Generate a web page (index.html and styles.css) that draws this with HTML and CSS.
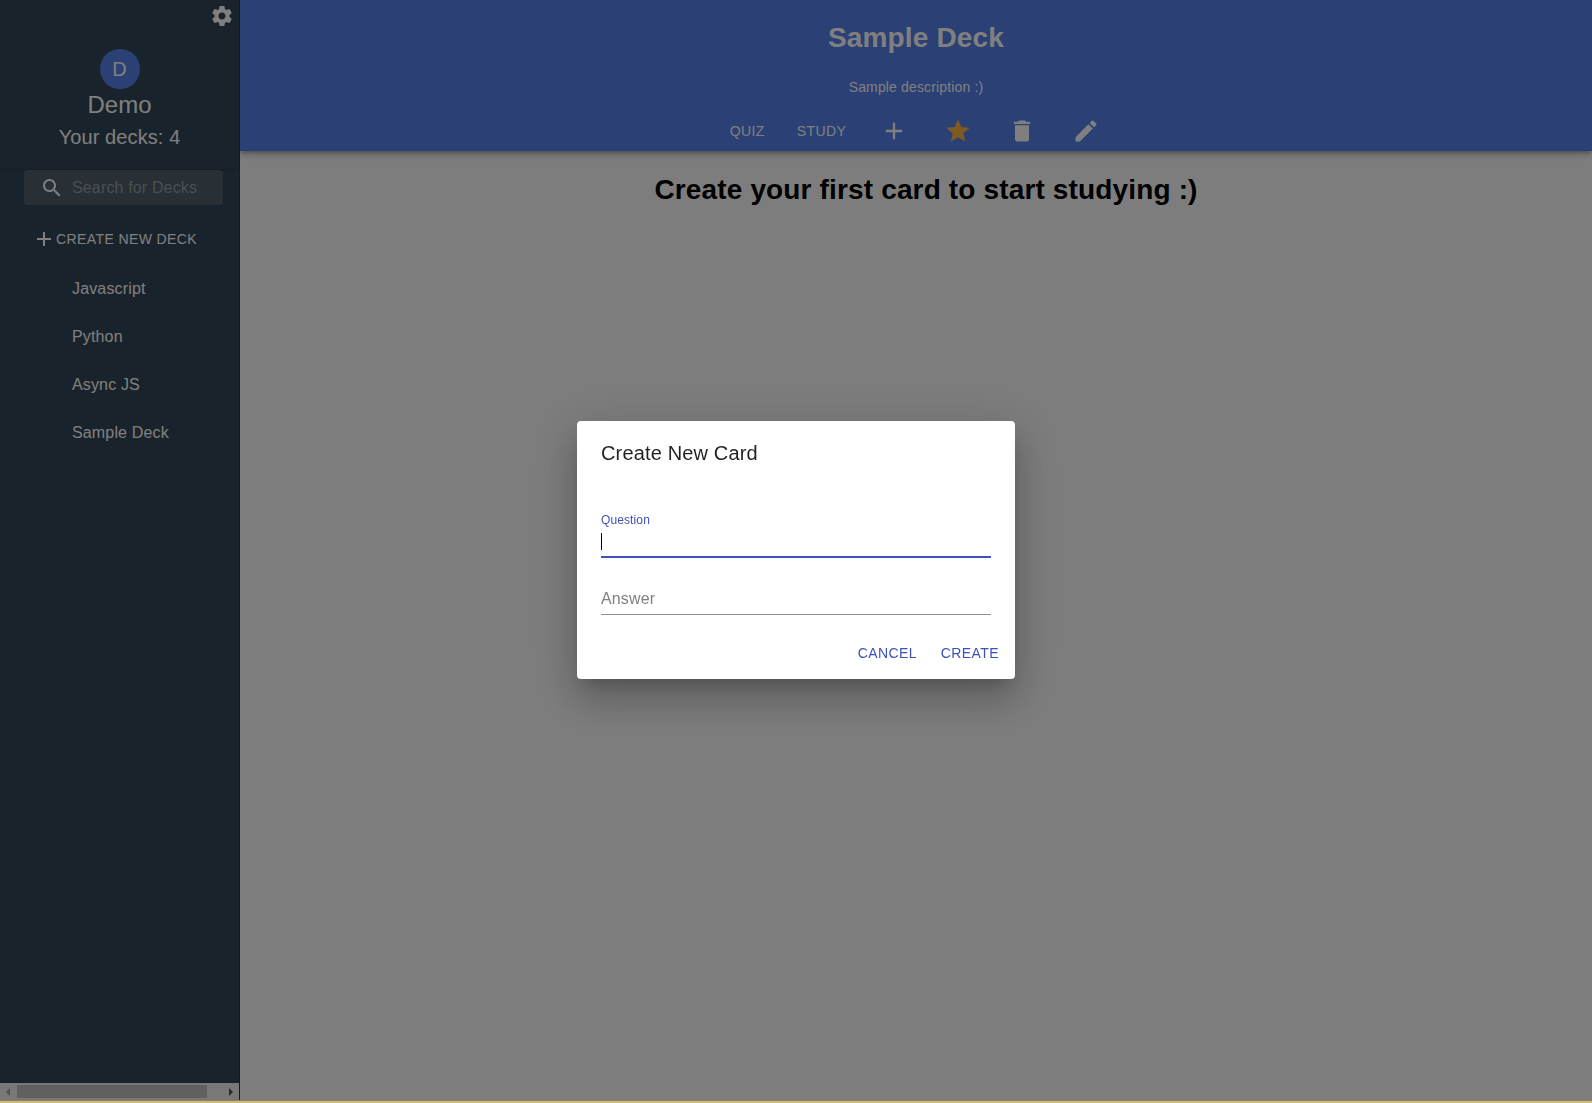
FILE: index.html
```html
<!DOCTYPE html>
<html lang="en">
<head>
<meta charset="utf-8">
<title>Flash Cards</title>
<link rel="stylesheet" href="styles.css">
</head>
<body>
<div class="app">
  <aside class="sidebar">
    <section class="profile">
      <svg class="icon gear" viewBox="0 0 24 24"><path d="M19.43 12.98c.04-.32.07-.64.07-.98s-.03-.66-.07-.98l2.11-1.65c.19-.15.24-.42.12-.64l-2-3.46c-.12-.22-.39-.3-.61-.22l-2.49 1c-.52-.4-1.08-.73-1.69-.98l-.38-2.65C14.46 2.18 14.25 2 14 2h-4c-.25 0-.46.18-.49.42l-.38 2.65c-.61.25-1.17.59-1.69.98l-2.49-1c-.23-.09-.49 0-.61.22l-2 3.46c-.13.22-.07.49.12.64l2.11 1.65c-.04.32-.07.65-.07.98s.03.66.07.98l-2.11 1.65c-.19.15-.24.42-.12.64l2 3.46c.12.22.39.3.61.22l2.49-1c.52.4 1.08.73 1.69.98l.38 2.65c.03.24.24.42.49.42h4c.25 0 .46-.18.49-.42l.38-2.65c.61-.25 1.17-.59 1.69-.98l2.49 1c.23.09.49 0 .61-.22l2-3.46c.12-.22.07-.49-.12-.64l-2.11-1.65zM12 15.5c-1.93 0-3.5-1.57-3.5-3.5s1.57-3.5 3.5-3.5 3.5 1.57 3.5 3.5-1.57 3.5-3.5 3.5z"/></svg>
      <div class="avatar">D</div>
      <div class="user-name">Demo</div>
      <div class="deck-count">Your decks: 4</div>
    </section>
    <div class="search">
      <svg class="icon search-icon" viewBox="0 0 24 24"><path d="M15.5 14h-.79l-.28-.27C15.41 12.59 16 11.11 16 9.5 16 5.91 13.09 3 9.5 3S3 5.91 3 9.5 5.91 16 9.5 16c1.61 0 3.09-.59 4.23-1.57l.27.28v.79l5 4.99L20.49 19l-4.99-5zm-6 0C7.01 14 5 11.99 5 9.5S7.01 5 9.5 5 14 7.01 14 9.5 11.99 14 9.5 14z"/></svg>
      <span class="search-text">Search for Decks</span>
    </div>
    <div class="new-deck">
      <svg class="icon plus-small" viewBox="0 0 14 14"><path d="M6 0h2v6h6v2H8v6H6V8H0V6h6z"/></svg>
      <span>CREATE NEW DECK</span>
    </div>
    <nav class="decks">
      <div class="deck">Javascript</div>
      <div class="deck">Python</div>
      <div class="deck">Async JS</div>
      <div class="deck">Sample Deck</div>
    </nav>
    <div class="scrollbar">
      <svg class="arrow arrow-off" viewBox="0 0 4 8"><path d="M4 0v8L0 4z"/></svg>
      <div class="track"><div class="thumb"></div></div>
      <svg class="arrow" viewBox="0 0 4 8"><path d="M0 0v8l4-4z"/></svg>
    </div>
  </aside>
  <main class="content">
    <header class="header">
      <h1 class="title">Sample Deck</h1>
      <p class="description">Sample description :)</p>
      <div class="actions">
        <span class="text-btn">QUIZ</span>
        <span class="text-btn">STUDY</span>
        <span class="icon-btn"><svg class="icon" viewBox="0 0 24 24"><path d="M19 13h-6v6h-2v-6H5v-2h6V5h2v6h6v2z"/></svg></span>
        <span class="icon-btn"><svg class="icon star" viewBox="0 0 24 24"><path d="M12 17.27L18.18 21l-1.64-7.03L22 9.24l-7.19-.61L12 2 9.19 8.63 2 9.24l5.46 4.73L5.82 21z"/></svg></span>
        <span class="icon-btn"><svg class="icon" viewBox="0 0 24 24"><path d="M6 19c0 1.1.9 2 2 2h8c1.1 0 2-.9 2-2V7H6v12zM19 4h-3.500l-1-1h-5l-1 1H5v2h14V4z"/></svg></span>
        <span class="icon-btn"><svg class="icon" viewBox="0 0 24 24"><path d="M3 17.250V21h3.750L17.810 9.940l-3.750-3.750L3 17.250zM20.710 7.040c.39-.39.39-1.020 0-1.410l-2.340-2.340c-.39-.39-1.020-.39-1.410 0l-1.830 1.830 3.750 3.750 1.830-1.830z"/></svg></span>
      </div>
    </header>
    <h2 class="empty">Create your first card to start studying :)</h2>
  </main>
</div>
<div class="backdrop">
  <div class="dialog">
    <h3 class="dialog-title">Create New Card</h3>
    <div class="field focused">
      <div class="label">Question</div>
      <div class="input"><span class="caret"></span></div>
    </div>
    <div class="field">
      <div class="input placeholder">Answer</div>
    </div>
    <div class="dialog-actions"><span>CANCEL</span><span>CREATE</span></div>
  </div>
</div>
<div class="bottom-edge"></div>
</body>
</html>
```
FILE: styles.css
```css
* { box-sizing: border-box; }
body {
  margin: 0;
  height: 1103px;
  overflow: hidden;
  background: #fafafa;
  font-family: "Liberation Sans", Arial, sans-serif;
  font-size: 16px;
  letter-spacing: .15px;
}
h1, h2, h3, p { margin: 0; }
.icon { display: block; width: 24px; height: 24px; fill: currentColor; }
.app { display: flex; height: 1100px; }

.sidebar {
  display: flex;
  flex-direction: column;
  width: 240px;
  flex: none;
  background: #324656;
  border-right: 1px solid #263642;
  color: #fff;
}
.profile {
  height: 170px;
  display: flex;
  flex-direction: column;
  align-items: center;
  border-bottom: 1px solid #2b3c49;
}
.gear { flex: none; align-self: flex-end; margin: 4px 5px 21px 0; }
.avatar {
  width: 40px;
  height: 40px;
  border-radius: 50%;
  background: #5680e9;
  font-size: 20px;
  line-height: 40px;
  text-align: center;
}
.user-name { font-size: 24px; line-height: 32px; letter-spacing: 0; }
.deck-count { font-size: 20px; line-height: 32px; letter-spacing: .1px; }
.search {
  display: flex;
  align-items: center;
  height: 35px;
  margin: 0 16px 0 24px;
  border-radius: 4px;
  background: #515e6a;
}
.search-icon { margin: 0 8px 0 16px; width: 24px; }
.search-text { color: #969ea5; }
.new-deck {
  display: flex;
  align-items: center;
  gap: 5px;
  height: 36px;
  margin: 16px 0 0 37px;
  font-size: 14px;
  letter-spacing: .4px;
}
.plus-small { width: 14px; height: 14px; }
.decks { margin-top: 8px; flex: 1; }
.deck { height: 48px; line-height: 48px; padding-left: 72px; }
.scrollbar {
  display: flex;
  align-items: center;
  height: 17px;
  padding: 0 6px;
  background: #f1f1f1;
}
.arrow { width: 4px; height: 8px; fill: #505050; }
.arrow-off { fill: #a3a3a3; }
.track { flex: 1; padding: 0 7px; }
.thumb { width: 190px; height: 13px; background: #c1c1c1; }

.content { flex: 1; text-align: center; }
.header {
  height: 151px;
  background: #5680e9;
  color: #fff;
  box-shadow: 0 2px 4px -1px rgba(0,0,0,.2), 0 4px 5px rgba(0,0,0,.14), 0 1px 10px rgba(0,0,0,.12);
  clip-path: inset(0 0 -20px 0);
}
.title { padding-top: 21px; font-size: 28px; line-height: 33px; }
.description { padding-top: 25px; font-size: 14px; line-height: 16px; }
.actions {
  display: flex;
  justify-content: center;
  align-items: center;
  height: 48px;
  margin-top: 12px;
}
.text-btn { padding: 0 16px; font-size: 14px; letter-spacing: .4px; }
.icon-btn { padding: 0 18px; }
.icon-btn .icon { width: 28px; height: 28px; }
.star { color: #ffb547; }
.empty { padding: 22px 0 0 20px; font-size: 28px; line-height: 33px; }

.backdrop {
  position: fixed;
  inset: 0 0 3px;
  display: flex;
  align-items: center;
  justify-content: center;
  background: rgba(0,0,0,.5);
}
.dialog {
  width: 438px;
  height: 258px;
  padding: 16px 24px 8px;
  border-radius: 4px;
  background: #fff;
  color: rgba(0,0,0,.87);
  box-shadow: 0 11px 15px -7px rgba(0,0,0,.2), 0 24px 38px 3px rgba(0,0,0,.14), 0 9px 46px 8px rgba(0,0,0,.12);
}
.dialog-title { font-size: 20px; font-weight: 400; line-height: 32px; margin-bottom: 43px; }
.label { font-size: 12px; line-height: 16px; color: #3f51b5; letter-spacing: .11px; }
.input { height: 25px; line-height: 18px; border-bottom: 1px solid #949494; }
.focused .input { height: 30px; padding-top: 5px; border-bottom: 2px solid #3f51b5; }
.caret { display: block; width: 1px; height: 17px; background: #000; }
.placeholder { margin-top: 32px; color: #808080; }
.dialog-actions {
  display: flex;
  justify-content: flex-end;
  gap: 24px;
  margin: 20px -8px 0 0;
  font-size: 14px;
  line-height: 36px;
  letter-spacing: .4px;
  color: #3f51b5;
}
.bottom-edge { height: 3px; background: #ccb97d; border-top: 1px solid #8f825c; }
```
